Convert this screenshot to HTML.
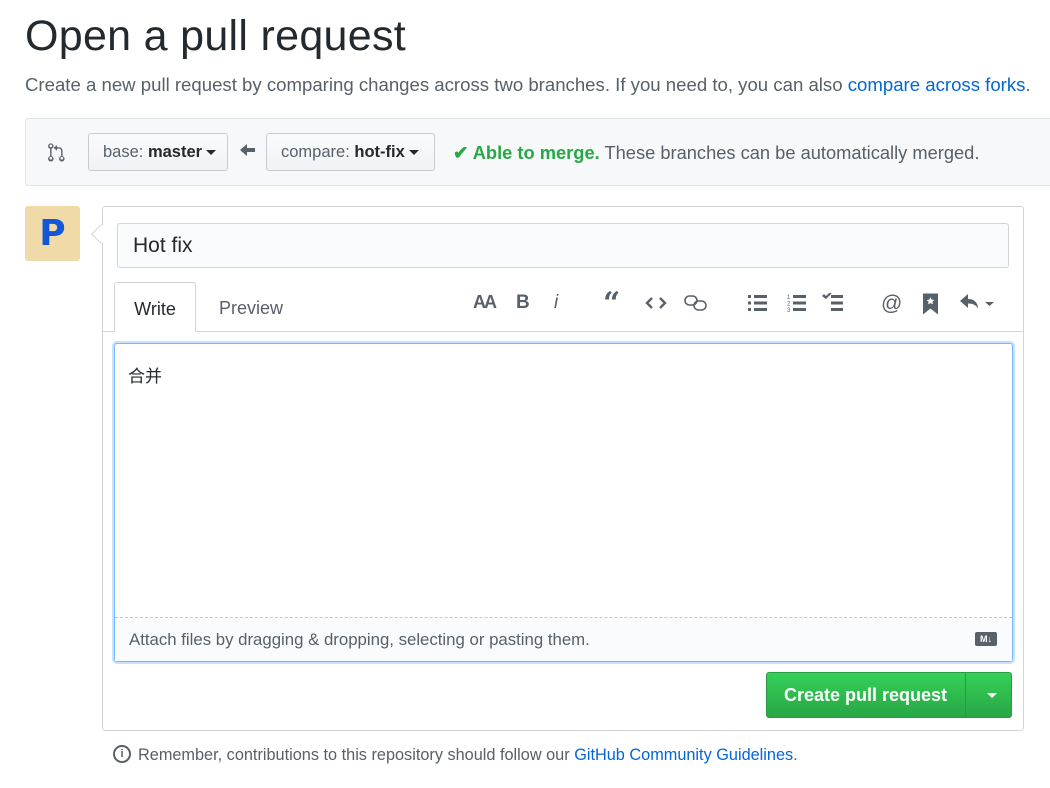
<!DOCTYPE html>
<html><head><meta charset="utf-8"><style>
*{box-sizing:border-box}
body{margin:0;width:1050px;height:788px;overflow:hidden;background:#fff;font-family:"Liberation Sans","Noto Sans CJK SC",sans-serif;color:#24292e;position:relative}
.a{position:absolute;white-space:nowrap}
h1{position:absolute;left:25px;top:12px;margin:0;font-size:43px;font-weight:400;letter-spacing:0.3px}
.sub{left:25px;top:74px;font-size:18.6px;color:#586069}
.sub a{color:#0366d6;text-decoration:none}
.bar{left:25px;top:118px;width:1040px;height:68px;background:#f6f8fa;border:1px solid #e1e4e8;border-radius:3px}
.btn{top:133px;height:38px;border:1px solid #c8ccd1;border-radius:3px;background:linear-gradient(#fafbfc,#eff3f6);font-size:16px;color:#586069;line-height:36px;padding:0 14px}
.btn b{color:#24292e;font-weight:600}
.caret{display:inline-block;border:5px solid transparent;border-top:5px solid #24292e;border-bottom:0;vertical-align:middle;margin-left:4px}
.box{left:102px;top:206px;width:922px;height:525px;border:1px solid #d1d5da;border-radius:3px}
.inp{left:117px;top:223px;width:892px;height:45px;border:1px solid #d1d5da;border-radius:3px;background:#fafbfc;font-size:21px;line-height:43px;padding-left:15px}
.tabline{left:103px;top:331px;width:920px;border-top:1px solid #d1d5da}
.tab{left:114px;top:282px;width:82px;height:50px;border:1px solid #d1d5da;border-bottom:1px solid #fff;border-radius:3px 3px 0 0;background:#fff;font-size:18px;text-align:center;line-height:52px}
.ta{left:114px;top:343px;width:899px;height:319px;border:1px solid #79b8ff;border-radius:3px;box-shadow:0 0 0 2px #c8e1ff;background:#fff}
.ic{top:292px;font-size:19px;color:#586069;font-weight:700}
.cpr{left:766px;top:672px;width:246px;height:46px;border-radius:3px;background:linear-gradient(#34d058,#28a745);border:1px solid #2a9a44;color:#fff;font-weight:700;font-size:18px;line-height:44px}
</style></head><body>
<h1>Open a pull request</h1>
<div class="a sub">Create a new pull request by comparing changes across two branches. If you need to, you can also <a>compare across forks</a>.</div>
<div class="a bar"></div>
<svg class="a" style="left:46px;top:141px" width="22" height="22" viewBox="0 0 16 16" fill="#586069"><path d="M4 11V5.7a2 2 0 1 0-1 0V11a2 2 0 1 0 1 0zM3.5 2.5a1 1 0 1 1 0 2 1 1 0 0 1 0-2zm0 11a1 1 0 1 1 0-2 1 1 0 0 1 0 2zM12 11V7c0-1.5-1-2.5-2.5-2.5H8V3L5.5 5 8 7V5.5h1.5C10.5 5.5 11 6 11 7v4a2 2 0 1 0 1 0zm-.5 2.5a1 1 0 1 1 0-2 1 1 0 0 1 0 2z"/></svg>
<div class="a btn" style="left:88px;width:140px;font-size:16.5px">base: <b>master</b><span class="caret"></span></div>
<svg class="a" style="left:240px;top:143px" width="16" height="14" viewBox="0 0 16 14" fill="#586069"><path d="M0 7l7-6v4h8v4H7v4z"/></svg>
<div class="a btn" style="left:266px;width:169px;font-size:16.5px">compare: <b>hot-fix</b><span class="caret"></span></div>
<div class="a" style="left:453px;top:142px;font-size:18.3px;color:#586069"><span style="color:#28a745;font-weight:700">✔ Able to merge.</span> These branches can be automatically merged.</div>
<div class="a" style="left:25px;top:206px;width:55px;height:55px;background:#f0dba8;border-radius:3px;color:#1456d8;font-weight:900;font-size:36px;text-align:center;line-height:55px;font-family:'DejaVu Sans',sans-serif">P</div>
<div class="a box"></div>
<div class="a" style="left:94px;top:227px;width:14px;height:14px;background:#fff;border-left:1px solid #d1d5da;border-bottom:1px solid #d1d5da;transform:rotate(45deg)"></div>
<div class="a inp">Hot fix</div>
<div class="a tabline"></div>
<div class="a tab">Write</div>
<div class="a" style="left:219px;top:298px;font-size:18px;color:#586069">Preview</div>
<div class="a ic" style="left:473px;font-size:18px;letter-spacing:-2px">AA</div>
<div class="a ic" style="left:516px">B</div>
<div class="a ic" style="left:554px;font-style:italic;font-weight:400">i</div>
<div class="a ic" style="left:603px;top:286px;font-size:30px;font-family:'DejaVu Serif',serif">“</div>
<svg class="a" style="left:645px;top:296px" width="22" height="14" viewBox="0 0 22 14" fill="none" stroke="#586069" stroke-width="2.4"><path d="M7 2L2 7l5 5M15 2l5 5-5 5"/></svg>
<svg class="a" style="left:684px;top:295px" width="24" height="16" viewBox="0 0 24 16" fill="none" stroke="#586069" stroke-width="1.6"><rect x="1" y="1" width="12" height="9" rx="4.5"/><rect x="10" y="6" width="12" height="9" rx="4.5"/></svg>
<svg class="a" style="left:748px;top:294px" width="20" height="18" viewBox="0 0 20 18" fill="#586069"><rect x="0" y="1" width="3" height="3"/><rect x="6" y="1" width="13" height="3"/><rect x="0" y="7.5" width="3" height="3"/><rect x="6" y="7.5" width="13" height="3"/><rect x="0" y="14" width="3" height="3"/><rect x="6" y="14" width="13" height="3"/></svg>
<svg class="a" style="left:787px;top:294px" width="20" height="18" viewBox="0 0 20 18" fill="#586069"><text x="0" y="5" font-size="6" font-family="Liberation Sans">1</text><text x="0" y="11.5" font-size="6" font-family="Liberation Sans">2</text><text x="0" y="18" font-size="6" font-family="Liberation Sans">3</text><rect x="6" y="1" width="13" height="3"/><rect x="6" y="7.5" width="13" height="3"/><rect x="6" y="14" width="13" height="3"/></svg>
<svg class="a" style="left:822px;top:293px" width="22" height="19" viewBox="0 0 22 19" fill="#586069"><path d="M0 3l2-2 2 2 4-4 1.5 1.5L4 6z"/><rect x="9" y="2" width="12" height="3"/><rect x="9" y="8.5" width="12" height="3"/><rect x="9" y="15" width="12" height="3"/></svg>
<div class="a ic" style="left:881px;font-weight:400;font-size:21px">@</div>
<svg class="a" style="left:923px;top:293px" width="15" height="22" viewBox="0 0 10 14" fill="#586069"><path d="M0 0h10v14L5 10 0 14z"/><path d="M5 2.5l.8 1.6 1.7.2-1.2 1.2.3 1.7L5 6.4 3.4 7.2l.3-1.7L2.5 4.3l1.7-.2z" fill="#fff"/></svg>
<svg class="a" style="left:959px;top:292px" width="38" height="22" viewBox="0 0 38 22" fill="#586069"><path d="M9 2L1 9l8 7v-4.5c5 0 8 1.5 10 5 0-6-4-9.5-10-9.5z"/><path d="M26 10h9l-4.5 4z"/></svg>
<div class="a ta"></div>
<div class="a" style="left:128px;top:362px;font-size:17px">合并</div>
<div class="a" style="left:115px;top:617px;width:897px;height:44px;border-top:1px dashed #c3c8cf;background:#fafbfc"></div>
<div class="a" style="left:129px;top:630px;font-size:16.8px;color:#586069">Attach files by dragging &amp; dropping, selecting or pasting them.</div>
<div class="a" style="left:975px;top:632px;width:22px;height:14px;background:#586069;border-radius:2px;color:#fff;font-size:9px;font-weight:700;text-align:center;line-height:14px">M↓</div>
<div class="a cpr"><span style="position:absolute;left:17px">Create pull request</span><span style="position:absolute;left:198px;top:0;height:44px;border-left:1px solid #2a9a44"></span><span class="caret" style="position:absolute;left:216px;top:20px;border-top-color:#fff"></span></div>
<div class="a" style="left:113px;top:745px;width:18px;height:18px;border:2px solid #586069;border-radius:50%;font-size:11px;font-weight:700;text-align:center;line-height:14px;color:#586069">i</div>
<div class="a" style="left:138px;top:746px;font-size:16.3px;color:#586069">Remember, contributions to this repository should follow our <span style="color:#0366d6">GitHub Community Guidelines</span>.</div>
</body></html>
